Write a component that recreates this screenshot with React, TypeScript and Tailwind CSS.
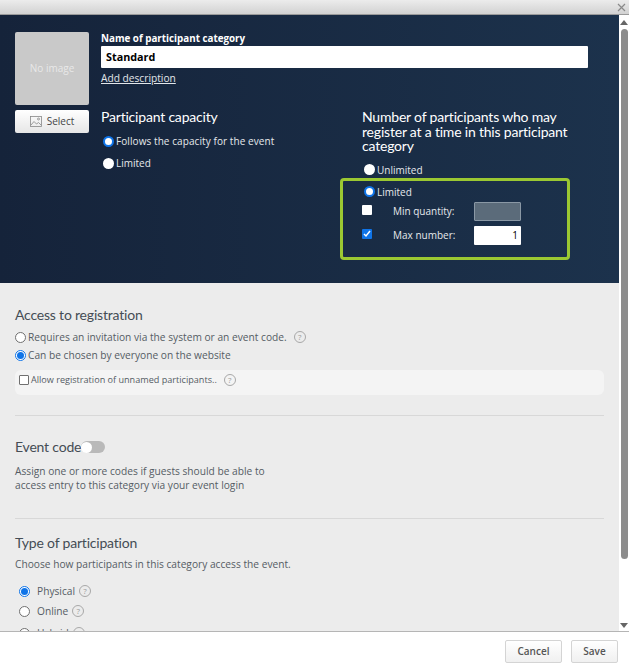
import React from "react";

const body = "font-['Open_Sans','Noto_Sans',sans-serif]";

function Help({ className = "" }: { className?: string }) {
  return (
    <span className={`inline-flex h-[12px] w-[12px] shrink-0 items-center justify-center rounded-full border border-[#a8a8a8] text-[8px] leading-none text-[#999] ${className}`}>?</span>
  );
}

function Radio({ on = false }: { on?: boolean }) {
  return (
    <span className={`block h-[11px] w-[11px] shrink-0 rounded-full bg-white ${on ? "border-[2px] border-[#0f74e8]" : ""}`} />
  );
}

function LightRadio({ on = false }: { on?: boolean }) {
  return (
    <span className={`flex h-[11px] w-[11px] shrink-0 items-center justify-center rounded-full border bg-white ${on ? "border-[#0f74e8]" : "border-[#707070]"}`}>
      {on && <span className="block h-[7px] w-[7px] rounded-full bg-[#0f74e8]" />}
    </span>
  );
}

const heading = "font-['Lato',sans-serif] text-[14px] tracking-[-0.2px] text-[#454d55]";

export default function App() {
  return (
    <div className={`flex h-[670px] w-[629px] flex-col overflow-hidden bg-white ${body}`}>
      <div className="flex h-[15px] shrink-0 items-center justify-end border-b border-[#9a9a9a] bg-gradient-to-b from-[#ececec] to-[#d2d2d2] pr-[3px]">
        <svg width="9" height="9" viewBox="0 0 9 9" stroke="#8a8a8a" strokeWidth="1.2"><path d="M1 1l7 7M8 1l-7 7" /></svg>
      </div>

      <div className="flex h-[616px] shrink-0">
        <div className="w-[619px] overflow-hidden bg-[#ececec]">
          <div className="flex h-[268px] bg-gradient-to-r from-[#15233a] to-[#1c324c] pl-[15px] pt-[17px]">
            <div className="w-[74px] shrink-0">
              <div className="flex h-[73px] items-center justify-center rounded-[2px] bg-[#c9c9c9] text-[10px] text-[#e8e8e8]">No image</div>
              <div className="mt-[5px] flex h-[23px] items-center justify-center gap-[5px] rounded-[2px] bg-gradient-to-b from-white to-[#e6e6e6] text-[10px] text-[#444]">
                <svg width="12" height="11" viewBox="0 0 12 11" fill="none" stroke="#888" strokeWidth="0.8"><rect x="0.5" y="0.5" width="11" height="10" /><path d="M1 9l3-3.5 2.5 2.5 2-1.5L11 9" /><circle cx="8.5" cy="3" r="1" /></svg>
                <span>Select</span>
              </div>
            </div>
            <div className="ml-[12px] w-[487px]">
              <div className="text-[9.8px] font-bold leading-[14px] text-white">Name of participant category</div>
              <div className="flex h-[22px] items-center rounded-[1px] bg-white pl-[5px] text-[10.8px] font-bold text-black">Standard</div>
              <div className="mt-[3px] text-[10.2px] leading-[15px] text-[#e2e6ea] underline">Add description</div>
              <div className="mt-[17px] flex">
                <div className="w-[261px] pt-[5px]">
                  <div className="font-['Lato',sans-serif] text-[14px] leading-[17px] tracking-[-0.2px] text-white">Participant capacity</div>
                  <div className="ml-[2px] mt-[9px] flex items-center gap-[2px] text-[10px] leading-[14px] text-[#e6e9ec]"><Radio on /><span className="tracking-[0.08px]">Follows the capacity for the event</span></div>
                  <div className="ml-[2px] mt-[8px] flex items-center gap-[2px] text-[10px] leading-[14px] text-[#e6e9ec]"><Radio />Limited</div>
                </div>
                <div className="w-[226px] pt-[7px]">
                  <div className="font-['Lato',sans-serif] text-[14px] leading-[14.5px] tracking-[-0.2px] text-white">Number of participants who may register at a time in this participant category</div>
                  <div className="ml-[2px] mt-[9px] flex items-center gap-[2px] text-[10px] leading-[14px] text-[#e6e9ec]"><Radio />Unlimited</div>
                  <div className="-ml-[22px] mt-[1px] h-[82px] w-[230px] rounded-[4px] border-[3px] border-[#9bc832] pl-[20px] pt-[4px] text-[10px] text-[#e6e9ec]">
                    <div className="ml-[1px] flex items-center gap-[2px] leading-[14px]"><Radio on />Limited</div>
                    <div className="mt-[3px] flex h-[19px] items-center">
                      <span className="-ml-[1px] mb-[3px] h-[10px] w-[10px] rounded-[1px] bg-white" />
                      <span className="ml-[21px] w-[81px]">Min quantity:</span>
                      <span className="h-[19px] w-[47px] rounded-[1px] border border-[#8a98a5] bg-[#5b6b7a]" />
                    </div>
                    <div className="mt-[5px] flex h-[19px] items-center">
                      <span className="-ml-[1px] mb-[3px] flex h-[10px] w-[10px] items-center justify-center rounded-[1px] bg-[#0f74e8]">
                        <svg width="8" height="8" viewBox="0 0 8 8" fill="none" stroke="#fff" strokeWidth="1.5"><path d="M1 4l2 2 4-5" /></svg>
                      </span>
                      <span className="ml-[21px] w-[81px]">Max number:</span>
                      <span className="h-[19px] w-[47px] rounded-[1px] bg-white pr-[3px] text-right text-[10px] font-medium leading-[19px] text-black">1</span>
                    </div>
                  </div>
                </div>
              </div>
            </div>
          </div>

          <div className="px-[15px] text-[#555c64]">
            <div className={`mt-[22px] leading-[20px] ${heading}`}>Access to registration</div>
            <div className="mt-[3px] flex items-center gap-[2px] text-[10.2px] leading-[18px]"><LightRadio />Requires an invitation via the system or an event code.<Help className="ml-[5px]" /></div>
            <div className="flex items-center gap-[2px] text-[10.2px] leading-[18px]"><LightRadio on />Can be chosen by everyone on the website</div>
            <div className="mt-[6px] flex h-[25px] items-center gap-[2px] rounded-[6px] bg-[#f4f4f4] pb-[5px] pl-[4px] text-[9.1px]">
              <span className="h-[10px] w-[10px] rounded-[1px] border border-[#707070] bg-white" />Allow registration of unnamed participants..<Help className="ml-[5px]" />
            </div>
            <div className="mt-[20px] border-t border-[#d8d8d8]" />
            <div className={`mt-[21px] flex items-center leading-[20px] ${heading}`}>
              Event code
              <span className="flex h-[12px] w-[24px] items-center rounded-full bg-[#b9b9b9]"><span className="h-[11px] w-[11px] rounded-full bg-white" /></span>
            </div>
            <div className="mt-[7px] text-[10.2px] leading-[14px]">Assign one or more codes if guests should be able to<br />access entry to this category via your event login</div>
            <div className="mt-[26px] border-t border-[#d8d8d8]" />
            <div className={`mt-[14px] leading-[20px] ${heading}`}>Type of participation</div>
            <div className="mt-[3px] text-[10.2px] leading-[16px]">Choose how participants in this category access the event.</div>
            <div className="ml-[4px] mt-[12px] flex items-center gap-[7px] text-[10.2px] leading-[14px]"><LightRadio on /><span className="flex items-center gap-[4px]">Physical<Help /></span></div>
            <div className="ml-[4px] mt-[6px] flex items-center gap-[7px] text-[10.2px] leading-[14px]"><LightRadio /><span className="flex items-center gap-[4px]">Online<Help /></span></div>
            <div className="ml-[4px] mt-[8px] flex items-center gap-[7px] text-[10.2px] leading-[14px]"><LightRadio /><span className="flex items-center gap-[4px]">Hybrid<Help /></span></div>
          </div>
        </div>

        <div className="flex w-[10px] flex-col items-center bg-white">
          <span className="mt-[5px] h-0 w-0 border-x-[4px] border-b-[5px] border-x-transparent border-b-[#666]" />
          <span className="mt-[4px] h-[530px] w-[7px] rounded-full bg-[#8c8c8c]" />
          <span className="mb-[3px] mt-auto h-0 w-0 border-x-[4px] border-t-[5px] border-x-transparent border-t-[#666]" />
        </div>
      </div>

      <div className="flex flex-1 justify-end gap-[9px] border-t border-[#b5b5b5] pr-[11px] pt-[8px]">
        <span className="flex h-[23px] w-[57px] items-center justify-center rounded-[2px] border border-[#d4d4d4] bg-gradient-to-b from-white to-[#f0f0f0] text-[10px] font-semibold text-[#555]">Cancel</span>
        <span className="flex h-[23px] w-[47px] items-center justify-center rounded-[2px] border border-[#d4d4d4] bg-gradient-to-b from-white to-[#f0f0f0] text-[10px] font-semibold text-[#555]">Save</span>
      </div>
    </div>
  );
}
